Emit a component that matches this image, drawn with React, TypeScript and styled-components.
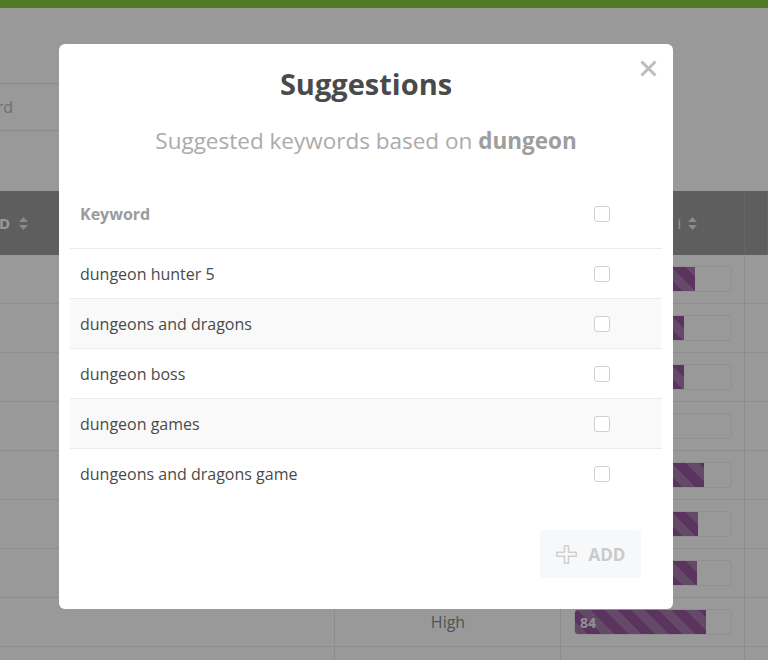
import React from 'react'
import styled, { createGlobalStyle } from 'styled-components'

const GlobalStyle = createGlobalStyle`
  html, body {
    margin: 0;
    padding: 0;
    background: #fff;
  }
  body {
    font-family: 'Open Sans', 'Noto Sans', sans-serif;
    overflow: hidden;
  }
`

const suggestions = [
  'dungeon hunter 5',
  'dungeons and dragons',
  'dungeon boss',
  'dungeon games',
  'dungeons and dragons game',
]

const results = [
  { level: 'Medium', score: 77 },
  { level: 'Medium', score: 70 },
  { level: 'Medium', score: 70 },
  { level: 'Low', score: 0 },
  { level: 'High', score: 83 },
  { level: 'High', score: 79 },
  { level: 'Medium', score: 78 },
  { level: 'High', score: 84 },
  { level: '', score: 0 },
]

const SortIcon = () => (
  <svg width="9" height="13" viewBox="0 0 9 13">
    <path d="M4.5 0 L9 5 L0 5 Z" fill="currentColor" />
    <path d="M0 8 L9 8 L4.5 13 Z" fill="currentColor" />
  </svg>
)

const App: React.FC = () => {
  return (
    <>
      <GlobalStyle />
      <Page>
        <TopBar />
        <SearchArea>
          <SearchBox>
            <Placeholder>Keyword</Placeholder>
          </SearchBox>
        </SearchArea>
        <Table>
          <HeaderRow>
            <HeaderCell>
              <HeaderLabel $shift={-65}>KEYWORD</HeaderLabel>
              <SortIcon />
            </HeaderCell>
            <HeaderCell>
              <HeaderLabel>Competition</HeaderLabel>
              <SortIcon />
            </HeaderCell>
            <HeaderCell $end>
              <HeaderLabel>Traffic</HeaderLabel>
              <Info>i</Info>
              <SortIcon />
            </HeaderCell>
            <HeaderCell />
          </HeaderRow>
          {results.map((r, i) => (
            <BodyRow key={i}>
              <Cell />
              <Cell $center>{r.level}</Cell>
              <Cell>
                {r.level && (
                  <Track>
                    {r.score > 0 && (
                      <Fill style={{ width: `${r.score}%` }}>{r.score}</Fill>
                    )}
                  </Track>
                )}
              </Cell>
              <Cell />
            </BodyRow>
          ))}
        </Table>
      </Page>

      <Overlay>
        <Modal>
          <CloseButton aria-label="Close">
            <svg width="17" height="17" viewBox="0 0 17 17">
              <path d="M1.5 1.5 L15.5 15.5 M15.5 1.5 L1.5 15.5" stroke="#bdbdbd" strokeWidth="3" />
            </svg>
          </CloseButton>
          <Title>Suggestions</Title>
          <Subtitle>
            Suggested keywords based on <strong>dungeon</strong>
          </Subtitle>
          <KeywordTable>
            <KeywordHead>
              <KeywordHeadLabel>Keyword</KeywordHeadLabel>
              <CheckCell>
                <Checkbox type="checkbox" />
              </CheckCell>
            </KeywordHead>
            {suggestions.map((s, i) => (
              <KeywordRow key={s} $striped={i % 2 === 1} $last={i === suggestions.length - 1}>
                <KeywordText>{s}</KeywordText>
                <CheckCell>
                  <Checkbox type="checkbox" />
                </CheckCell>
              </KeywordRow>
            ))}
          </KeywordTable>
          <Footer>
            <AddButton>
              <svg width="21" height="19" viewBox="0 0 21 19">
                <path
                  d="M8.5 0.75 H12.5 V7.25 H20.25 V11.25 H12.5 V18.25 H8.5 V11.25 H0.75 V7.25 H8.5 Z"
                  fill="none"
                  stroke="#cfcfcf"
                  strokeWidth="1.5"
                  strokeLinejoin="round"
                />
              </svg>
              ADD
            </AddButton>
          </Footer>
        </Modal>
      </Overlay>
    </>
  )
}

const Page = styled.div`
  width: 768px;
  height: 660px;
  overflow: hidden;
`

const TopBar = styled.div`
  height: 8px;
  background: #86cb3e;
`

const SearchArea = styled.div`
  padding-top: 75px;
`

const SearchBox = styled.div`
  width: 360px;
  height: 46px;
  display: flex;
  align-items: center;
  border-top: 1px solid #e8e8e8;
  border-bottom: 1px solid #e8e8e8;
  overflow: hidden;
`

const Placeholder = styled.span`
  margin-left: -52px;
  font-size: 16px;
  color: #b8b8c2;
`

const Table = styled.div`
  margin-top: 60px;
`

const HeaderRow = styled.div`
  display: grid;
  grid-template-columns: 335px 226px 184px 1fr;
  height: 64px;
  background: #9d9d9d;
  color: #fff;
`

const HeaderCell = styled.div<{ $end?: boolean }>`
  display: flex;
  align-items: center;
  justify-content: ${(p) => (p.$end ? 'flex-end' : 'flex-start')};
  gap: 5px;
  padding-right: ${(p) => (p.$end ? '47px' : '0')};
  font-size: 15px;
  font-weight: 700;
  color: #fff;
  border-right: 1px solid #a9a9a9;
  overflow: hidden;

  svg {
    color: rgba(255, 255, 255, 0.75);
  }
`

const HeaderLabel = styled.span<{ $shift?: number }>`
  margin-left: ${(p) => (p.$shift ? `${p.$shift}px` : '0')};
  white-space: nowrap;
  margin-right: 4px;
`

const Info = styled.span`
  font-weight: 400;
  font-size: 14px;
  margin-right: 2px;
`

const BodyRow = styled.div`
  display: grid;
  grid-template-columns: 335px 226px 184px 1fr;
  height: 49px;
  box-sizing: border-box;
  border-bottom: 1px solid #ececec;
`

const Cell = styled.div<{ $center?: boolean }>`
  display: flex;
  align-items: center;
  justify-content: ${(p) => (p.$center ? 'center' : 'flex-start')};
  padding: 0 12px 0 13px;
  border-right: 1px solid #ececec;
  font-size: 16px;
  color: #8c8c8c;
`

const Track = styled.div`
  flex: 1;
  height: 26px;
  box-sizing: border-box;
  border: 1px solid #f0f0f0;
  border-radius: 4px;
  overflow: hidden;
  display: flex;
`

const Fill = styled.div`
  height: 100%;
  display: flex;
  align-items: center;
  padding-left: 5px;
  box-sizing: border-box;
  font-size: 14px;
  font-weight: 700;
  color: #f2f2f2;
  background: repeating-linear-gradient(
    45deg,
    #a77cae 0,
    #a77cae 9px,
    #97569f 9px,
    #97569f 19px
  );
`

const Overlay = styled.div`
  position: fixed;
  inset: 0;
  background: rgba(0, 0, 0, 0.4);
  display: flex;
  align-items: flex-start;
  padding: 44px 0 0 59px;
`

const Modal = styled.div`
  position: relative;
  width: 614px;
  box-sizing: border-box;
  padding: 20px 11px 31px;
  background: #fff;
  border-radius: 6px;
`

const CloseButton = styled.button`
  position: absolute;
  top: 16px;
  right: 16px;
  width: 17px;
  height: 17px;
  padding: 0;
  border: none;
  background: none;
  display: flex;
  cursor: pointer;
`

const Title = styled.h2`
  margin: 0;
  font-size: 29px;
  line-height: 40px;
  font-weight: 700;
  color: #4a4a4a;
  text-align: center;
`

const Subtitle = styled.p`
  margin: 22px 0 23px;
  font-size: 22.5px;
  line-height: 30px;
  color: #ababab;
  text-align: center;

  strong {
    color: #9e9e9e;
    font-weight: 700;
  }
`

const KeywordTable = styled.div`
  display: flex;
  flex-direction: column;
`

const KeywordHead = styled.div`
  display: grid;
  grid-template-columns: 1fr 120px;
  align-items: center;
  height: 70px;
  box-sizing: border-box;
  border-bottom: 1px solid #ececec;
`

const KeywordHeadLabel = styled.span`
  padding-left: 10px;
  font-size: 16px;
  font-weight: 700;
  color: #9b9b9b;
`

const KeywordRow = styled.div<{ $striped: boolean; $last: boolean }>`
  display: grid;
  grid-template-columns: 1fr 120px;
  align-items: center;
  height: 50px;
  box-sizing: border-box;
  background: ${(p) => (p.$striped ? '#f9f9f9' : '#fff')};
  border-bottom: ${(p) => (p.$last ? 'none' : '1px solid #ececec')};
`

const KeywordText = styled.span`
  padding-left: 10px;
  font-size: 16px;
  color: #4a4a4a;
`

const CheckCell = styled.div`
  display: flex;
  justify-content: center;
`

const Checkbox = styled.input`
  appearance: none;
  margin: 0;
  width: 16px;
  height: 16px;
  box-sizing: border-box;
  border: 1.5px solid #cfcfcf;
  border-radius: 3px;
  background: #fff;
`

const Footer = styled.div`
  display: flex;
  justify-content: flex-end;
  margin-top: 31px;
  padding-right: 21px;
`

const AddButton = styled.button`
  width: 101px;
  height: 48px;
  display: flex;
  align-items: center;
  justify-content: center;
  gap: 12px;
  border: none;
  border-radius: 4px;
  background: #f7f8fa;
  font-family: inherit;
  font-size: 17px;
  font-weight: 700;
  color: #cacaca;
  cursor: pointer;
`

export default App
